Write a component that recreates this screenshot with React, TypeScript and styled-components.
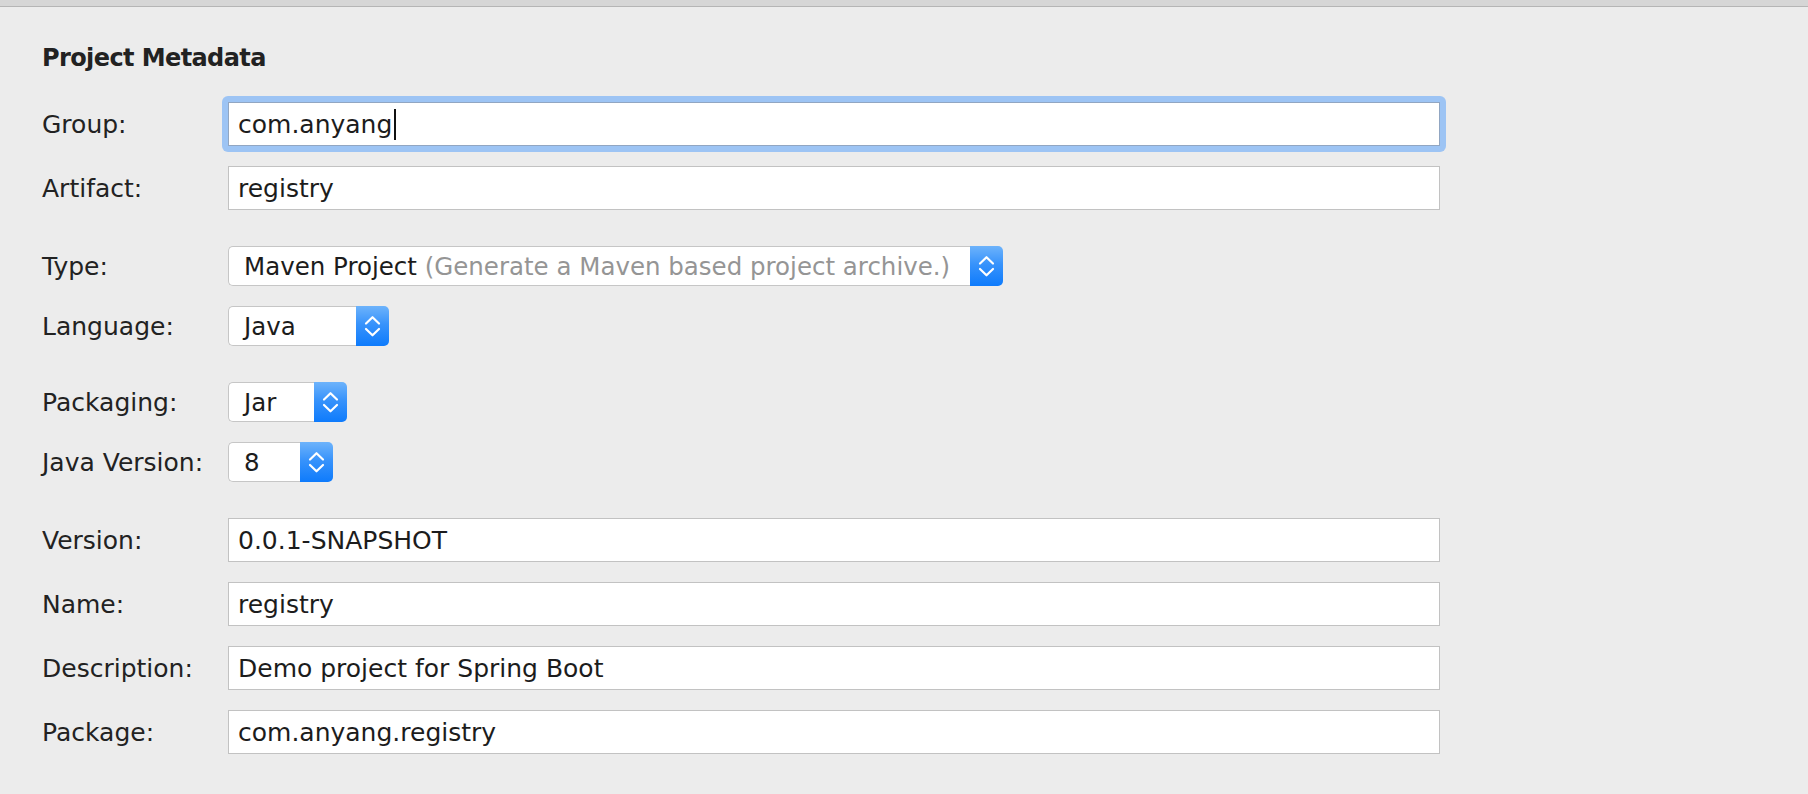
import React from "react";
import styled, { createGlobalStyle } from "styled-components";

const GlobalStyle = createGlobalStyle`
  html, body {
    margin: 0;
    padding: 0;
    background: #ececec;
  }
  body {
    font-family: "DejaVu Sans", "Liberation Sans", sans-serif;
    color: #222;
  }
`;

const Page = styled.div`
  min-height: 100vh;
  display: flex;
  flex-direction: column;
  background: #ececec;
`;

const TopBar = styled.div`
  height: 6px;
  background: #d6d6d6;
  border-bottom: 1px solid #b5b5b5;
`;

const Content = styled.div`
  display: flex;
  flex-direction: column;
  padding: 38px 0 0 42px;
`;

const Title = styled.h2`
  margin: 0 0 30px 0;
  font-size: 24px;
  line-height: 27px;
  font-weight: bold;
  letter-spacing: -0.6px;
  color: #222;
`;

const Sections = styled.div`
  display: flex;
  flex-direction: column;
  gap: 36px;
`;

const Section = styled.div`
  display: flex;
  flex-direction: column;
  gap: 20px;
`;

const Row = styled.div`
  display: flex;
  align-items: center;
`;

const Label = styled.div`
  width: 186px;
  font-size: 25px;
  color: #222;
  white-space: nowrap;
`;

const FocusRing = styled.div`
  display: flex;
  padding: 6px;
  margin: -6px;
  border-radius: 6px;
  background: #9dc4f4;
`;

const Field = styled.div<{ $focused?: boolean }>`
  box-sizing: border-box;
  width: 1212px;
  height: 44px;
  display: flex;
  align-items: center;
  padding: 0 9px;
  background: #fff;
  border: 1px solid ${(p) => (p.$focused ? "#91a6c2" : "#c2c2c2")};
  font-size: 25px;
  color: #1c1c1c;
  white-space: nowrap;
`;

const Caret = styled.span`
  display: inline-block;
  width: 2px;
  height: 31px;
  margin-left: 2px;
  background: #111;
`;

const SelectBox = styled.div<{ $w: number }>`
  display: flex;
  width: ${(p) => p.$w}px;
  height: 40px;
`;

const SelectValue = styled.div`
  flex: 1;
  box-sizing: border-box;
  display: flex;
  align-items: center;
  padding-left: 15px;
  background: #fff;
  border: 1px solid #c6c6c6;
  border-right: none;
  border-radius: 5px 0 0 5px;
  font-size: 24.5px;
  color: #1c1c1c;
  white-space: nowrap;
  overflow: hidden;
`;

const Hint = styled.span`
  color: #959595;
`;

const SelectButton = styled.div`
  width: 33px;
  flex: none;
  border-radius: 0 5px 5px 0;
  background: linear-gradient(#6db3fb 0%, #3893fb 45%, #0e7bfc 100%);
  display: flex;
  align-items: center;
  justify-content: center;
`;

const Chevrons = () => (
  <svg width="33" height="40" viewBox="0 0 33 40" fill="none">
    <path
      d="M10 17.5 L16.5 11.2 L23 17.5"
      stroke="#fff"
      strokeWidth="2.2"
      strokeLinecap="round"
      strokeLinejoin="round"
    />
    <path
      d="M10 23 L16.5 29.3 L23 23"
      stroke="#fff"
      strokeWidth="2.2"
      strokeLinecap="round"
      strokeLinejoin="round"
    />
  </svg>
);

const TextRow = ({
  label,
  value,
  focused,
}: {
  label: string;
  value: string;
  focused?: boolean;
}) => (
  <Row>
    <Label>{label}</Label>
    {focused ? (
      <FocusRing>
        <Field $focused>
          {value}
          <Caret />
        </Field>
      </FocusRing>
    ) : (
      <Field>{value}</Field>
    )}
  </Row>
);

const SelectRow = ({
  label,
  value,
  hint,
  width,
}: {
  label: string;
  value: string;
  hint?: string;
  width: number;
}) => (
  <Row>
    <Label>{label}</Label>
    <SelectBox $w={width}>
      <SelectValue>
        {value}
        {hint && <Hint>&nbsp;{hint}</Hint>}
      </SelectValue>
      <SelectButton>
        <Chevrons />
      </SelectButton>
    </SelectBox>
  </Row>
);

export default function App() {
  return (
    <>
      <GlobalStyle />
      <Page>
        <TopBar />
        <Content>
          <Title>Project Metadata</Title>
          <Sections>
            <Section>
              <TextRow label="Group:" value="com.anyang" focused />
              <TextRow label="Artifact:" value="registry" />
            </Section>
            <Section>
              <SelectRow
                label="Type:"
                value="Maven Project"
                hint="(Generate a Maven based project archive.)"
                width={775}
              />
              <SelectRow label="Language:" value="Java" width={161} />
            </Section>
            <Section>
              <SelectRow label="Packaging:" value="Jar" width={119} />
              <SelectRow label="Java Version:" value="8" width={105} />
            </Section>
            <Section>
              <TextRow label="Version:" value="0.0.1-SNAPSHOT" />
              <TextRow label="Name:" value="registry" />
              <TextRow label="Description:" value="Demo project for Spring Boot" />
              <TextRow label="Package:" value="com.anyang.registry" />
            </Section>
          </Sections>
        </Content>
      </Page>
    </>
  );
}
